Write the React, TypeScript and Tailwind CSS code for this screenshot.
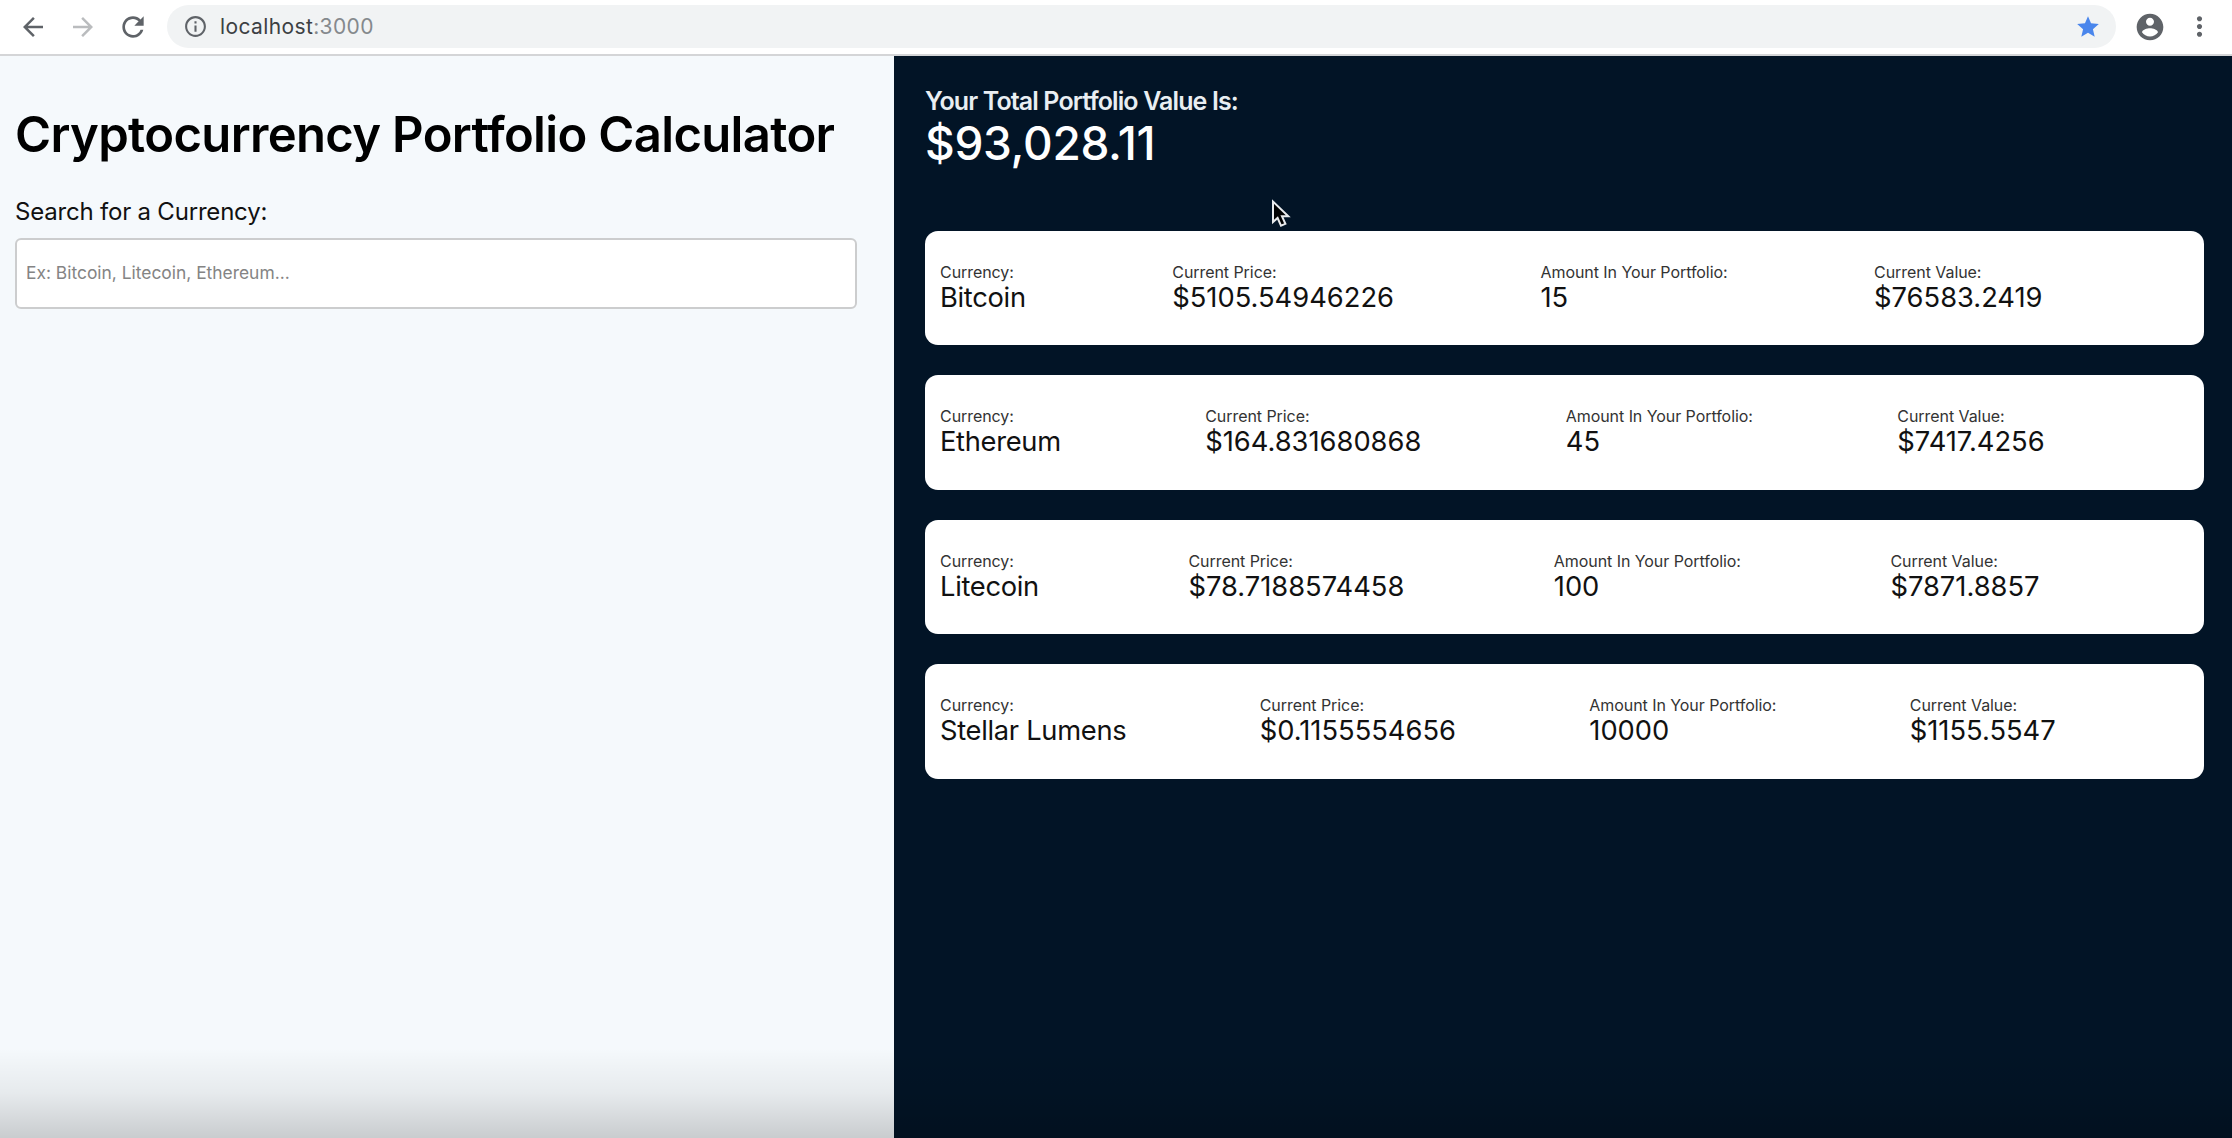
type Holding = { name: string; price: string; amount: string; value: string };

const holdings: Holding[] = [
  { name: "Bitcoin", price: "$5105.54946226", amount: "15", value: "$76583.2419" },
  { name: "Ethereum", price: "$164.831680868", amount: "45", value: "$7417.4256" },
  { name: "Litecoin", price: "$78.7188574458", amount: "100", value: "$7871.8857" },
  { name: "Stellar Lumens", price: "$0.1155554656", amount: "10000", value: "$1155.5547" },
];

function Icon({ d, className }: { d: string; className: string }) {
  return (
    <svg viewBox="0 0 24 24" fill="currentColor" className={className}>
      <path d={d} />
    </svg>
  );
}

function BrowserBar() {
  return (
    <header className="flex h-[56px] items-start border-b-2 border-[#d4d5d7] bg-white pt-[5px] text-[#5f6368]">
      <div className="flex h-[43px] w-[167px] shrink-0 items-center">
        <Icon className="ml-[18px] size-[30px]" d="M20 11H7.83l5.59-5.59L12 4l-8 8 8 8 1.41-1.41L7.83 13H20v-2z" />
        <Icon className="ml-[20px] size-[30px] text-[#babcbe]" d="M12 4l-1.41 1.41L16.17 11H4v2h12.17l-5.58 5.59L12 20l8-8z" />
        <Icon
          className="ml-[19px] size-[32px]"
          d="M17.65 6.35C16.2 4.9 14.21 4 12 4c-4.42 0-7.99 3.58-7.99 8s3.57 8 7.99 8c3.73 0 6.84-2.55 7.73-6h-2.08c-.82 2.33-3.04 4-5.65 4-3.31 0-6-2.69-6-6s2.69-6 6-6c1.66 0 3.14.69 4.22 1.78L13 11h7V4l-2.35 2.35z"
        />
      </div>
      <div className="flex h-[43px] w-[1949px] shrink-0 items-center rounded-full bg-[#f1f3f4] pl-[16px] pr-[15px]">
        <Icon
          className="size-[25px]"
          d="M11 7h2v2h-2zm0 4h2v6h-2zm1-9C6.48 2 2 6.48 2 12s4.48 10 10 10 10-4.480 10-10S17.520 2 12 2zm0 18c-4.410 0-8-3.590-8-8s3.590-8 8-8 8 3.590 8 8-3.590 8-8 8z"
        />
        <span className="ml-[12px] text-[21px] leading-[43px] tracking-[0.38px] text-[#3c4043]">
          localhost<span className="text-[#85898d]">:3000</span>
        </span>
        <Icon
          className="ml-auto size-[26px] text-[#4a86ec]"
          d="M12 17.270L18.180 21l-1.640-7.030L22 9.240l-7.190-.61L12 2 9.190 8.630 2 9.240l5.460 4.730L5.820 21z"
        />
      </div>
      <div className="flex h-[43px] items-center">
        <Icon
          className="ml-[18px] size-[32px]"
          d="M12 2C6.480 2 2 6.480 2 12s4.480 10 10 10 10-4.480 10-10S17.520 2 12 2zm0 3c1.660 0 3 1.340 3 3s-1.340 3-3 3-3-1.340-3-3 1.340-3 3-3zm0 14.200c-2.500 0-4.710-1.280-6-3.220.030-1.990 4-3.080 6-3.080 1.990 0 5.970 1.090 6 3.080-1.290 1.940-3.500 3.220-6 3.220z"
        />
        <Icon
          className="ml-[18px] size-[31px]"
          d="M12 8c1.100 0 2-.9 2-2s-.9-2-2-2-2 .9-2 2 .9 2 2 2zm0 2c-1.100 0-2 .9-2 2s.9 2 2 2 2-.9 2-2-.9-2-2-2zm0 6c-1.100 0-2 .9-2 2s.9 2 2 2 2-.9 2-2-.9-2-2-2z"
        />
      </div>
    </header>
  );
}

function Field({ label, value, valueClass }: { label: string; value: string; valueClass: string }) {
  return (
    <div className="flex-auto whitespace-nowrap">
      <div className="text-[16px] leading-[20px] tracking-[-0.06px] text-[#333]">{label}</div>
      <div className={`text-[27.3px] leading-[32px] text-[#111] ${valueClass}`}>{value}</div>
    </div>
  );
}

function SearchPanel() {
  return (
    <section className="flex w-[894px] shrink-0 flex-col bg-[#f5f9fc] px-[15px]">
      <h1 className="mt-[49px] whitespace-nowrap text-[49px] font-semibold leading-[60px] tracking-[-0.66px] text-black">
        Cryptocurrency Portfolio Calculator
      </h1>
      <label className="mt-[32px] text-[24px] leading-[30px] tracking-[-0.2px] text-[#111]">Search for a Currency:</label>
      <input
        placeholder="Ex: Bitcoin, Litecoin, Ethereum..."
        className="mt-[11px] h-[71px] w-[842px] rounded-[6px] border-2 border-[#cccdce] bg-white px-[9px] pb-[2px] text-[17.4px] placeholder:text-[#848484]"
      />
    </section>
  );
}

function PortfolioPanel() {
  return (
    <section className="relative flex-1 bg-[#021426] pl-[31px]">
      <div className="mt-[30px] text-[25px] font-semibold leading-[30px] tracking-[-0.88px] text-[#e9eef2]">
        Your Total Portfolio Value Is:
      </div>
      <div className="text-[46px] font-medium leading-[54px] tracking-[-0.3px] text-white">$93,028.11</div>
      <div className="mt-[61px] flex w-[1279px] flex-col gap-[30px]">
        {holdings.map((h) => (
          <article key={h.name} className="flex h-[114.4px] items-start rounded-[13px] bg-white px-[15px] pt-[31px]">
            <Field label="Currency:" value={h.name} valueClass="tracking-[-0.3px]" />
            <Field label="Current Price:" value={h.price} valueClass="tracking-normal" />
            <Field label="Amount In Your Portfolio:" value={h.amount} valueClass="tracking-normal" />
            <Field label="Current Value:" value={h.value} valueClass="tracking-normal" />
          </article>
        ))}
      </div>
      <svg viewBox="0 0 20 30" className="absolute left-[377px] top-[142px] h-[30px] w-[20px]">
        <path d="M2 3.500v20.500l4.600-4 3.400 7.700 4.400-1.900-3.400-7.500h6.300z" fill="#000" stroke="#e8eaec" strokeWidth="2" />
      </svg>
    </section>
  );
}

export default function App() {
  return (
    <div className="relative flex h-[1138px] w-[2232px] flex-col overflow-hidden font-[Inter,sans-serif] antialiased">
      <BrowserBar />
      <main className="flex flex-1">
        <SearchPanel />
        <PortfolioPanel />
      </main>
      <div className="pointer-events-none absolute inset-x-0 bottom-0 h-[90px] bg-linear-to-b from-black/0 via-black/6 to-black/18" />
    </div>
  );
}
